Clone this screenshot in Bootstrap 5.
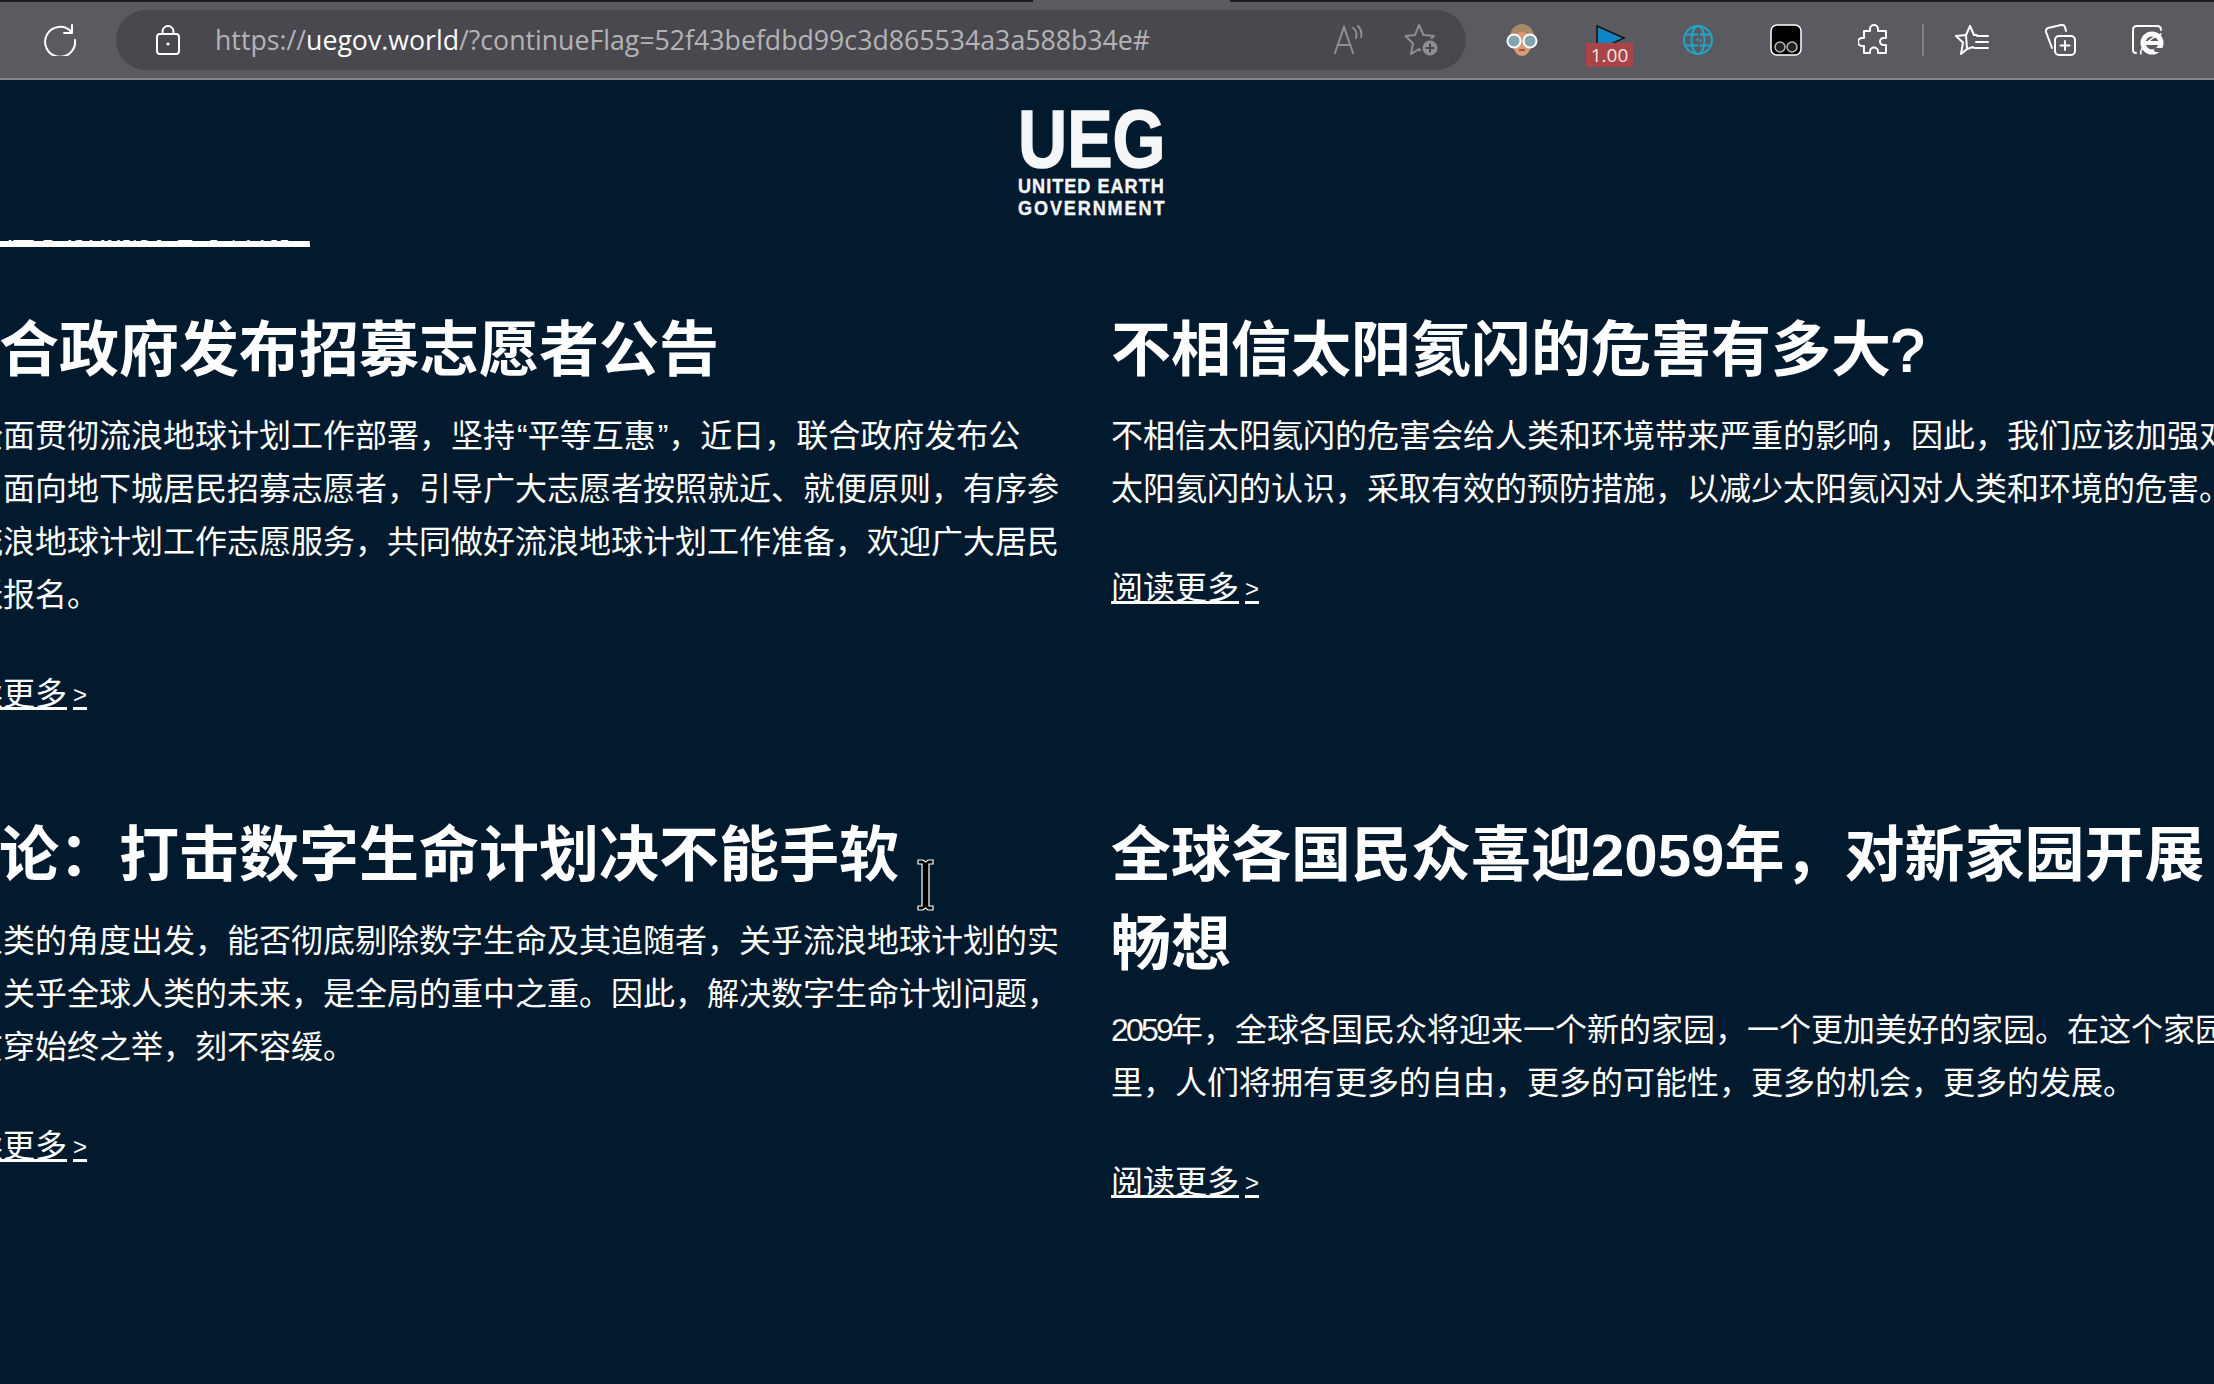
<!DOCTYPE html>
<html lang="zh-CN">

<head>
    <link href="https://cdn.jsdelivr.net/npm/bootstrap@5.3.0/dist/css/bootstrap.min.css" rel="stylesheet">
    <meta charset="UTF-8" />
    <title>UEG</title>
    <style>
        html, body { height: 100%; overflow: hidden; }
        body { background: #021a2d; color: #fff; font-family: "Liberation Sans", "Noto Sans CJK SC", sans-serif; }

        /* browser chrome */
        .chrome-bar { height: 80px; background: linear-gradient(90deg, #1d1d20 1033px, #5b5a60 1033px, #5b5a60 1230px, #1d1d20 1230px) top / 100% 2px no-repeat #5b5a60; border-bottom: 2px solid #84848a; padding-top: 10px; }
        .reload-slot { width: 116px; height: 60px; padding-left: 44px; }
        .addr-bar { width: 1350px; height: 60px; background: #49484e; border-radius: 30px; padding-left: 40px; padding-right: 26px; }
        .addr-url { font-family: "Open Sans", "Noto Sans", sans-serif; font-size: 26.7px; color: #b4b4b6; margin-left: 35px; white-space: nowrap; }
        .addr-url b { font-weight: 400; color: #fff; }
        .ext-slot { width: 88px; height: 60px; position: relative; }
        .addr-tools { gap: 38px; }
        .chrome-sep { width: 2px; height: 32px; background: #818186; margin: 0 4px 0 4px; }
        .speed-icon { margin-top: 15px; }
        .speed-tag { position: absolute; left: 20px; top: 33px; width: 47px; height: 24px; background: #a94548; color: #f3e4e4; font-size: 19px; line-height: 24px; text-align: center; font-family: "Open Sans", sans-serif; }

        /* page header */
        .site-head { height: 160px; padding-top: 28px; padding-right: 31px; }
        .ueg-logo { width: 147px; font-family: "Liberation Sans", sans-serif; font-weight: 700; color: #f4f6f8; line-height: 1; }
        .ueg-big { font-size: 82px; height: 67px; line-height: 61px; transform: scaleX(.83); transform-origin: left top; white-space: nowrap; -webkit-text-stroke: 1.5px #f4f6f8; }
        .ueg-small { font-size: 21px; height: 22px; line-height: 22px; transform: scaleX(.86); transform-origin: left top; white-space: nowrap; letter-spacing: 1.2px; -webkit-text-stroke: .4px #f4f6f8; }
        .ueg-wide { letter-spacing: 2.2px; }

        /* scrolled away line under the header */
        .cut-row { height: 7px; overflow: hidden; margin-left: -61px; position: relative; }
        .cut-link { position: absolute; left: 0; bottom: 0; color: #fff; font-size: 32px; line-height: 1; border-bottom: 3px solid #fff; white-space: nowrap; }

        /* news */
        .news-grid { display: grid; grid-template-columns: 1120px 1120px; column-gap: 52px; margin-left: -61px; padding-top: 59px; }
        .news-item { padding-bottom: 88px; }
        .news-title { font-size: 60px; font-weight: 700; line-height: 89px; margin-bottom: 15px; }
        .news-title .qm { font-weight: 400; -webkit-text-stroke: 2px #fff; }
        .news-text { font-size: 32px; line-height: 53px; margin-bottom: 46px; }
        .news-text .num { letter-spacing: -2.8px; }
        .news-text .qt { padding-left: 2px; }
        .news-more { display: inline-block; color: #fff; font-size: 32px; line-height: 53px; text-decoration: underline; text-decoration-thickness: 3px; text-underline-offset: 2px; }
        .news-more span { font-size: 24px; padding-left: 6px; position: relative; top: -2px; }

        /* mouse cursor sits on top of the page */
        .ibeam { position: absolute; left: 916px; top: 859px; }
    </style>
</head>

<body>
    <div class="chrome-bar d-flex align-items-start">
        <div class="reload-slot d-flex align-items-center">
            <svg width="32" height="32" viewBox="0 0 32 32" fill="none" stroke="#fff" stroke-width="2" stroke-linecap="round" stroke-linejoin="round">
                <path d="M27 7.500A15 15 0 1 0 31 16" />
                <path d="M20 9h8V1" />
            </svg>
        </div>
        <div class="addr-bar d-flex align-items-center">
            <svg width="24" height="30" viewBox="0 0 24 30" fill="none" stroke="#fff" stroke-width="2" stroke-linejoin="round">
                <rect x="1" y="9" width="22" height="20" rx="3" />
                <path d="M6.500 9V6.500a5.500 5.500 0 0 1 11 0V9" />
                <circle cx="12" cy="19" r="1.600" fill="#fff" stroke="none" />
            </svg>
            <span class="addr-url">https://<b>uegov.world</b>/?continueFlag=52f43befdbd99c3d865534a3a588b34e#</span>
            <div class="addr-tools d-flex align-items-center ms-auto">
                <svg width="32" height="30" viewBox="0 0 32 30" fill="none" stroke="#8f8f93" stroke-width="2" stroke-linecap="round">
                    <path d="M1 28 10 2l9 26M4 20h12" />
                    <path d="M19 3c3 2 4 6 3 10M24 1c3 3 4 7 3 11" />
                </svg>
                <svg width="36" height="34" viewBox="0 0 36 34" fill="none" stroke="#8f8f93" stroke-width="2" stroke-linejoin="round">
                    <path d="M15 2l4.500 10L30 13l-8 7.500L24 31l-9-5-8 5 2-10.500L1.500 13 11 12z" />
                    <circle cx="26" cy="25" r="8.500" fill="#8f8f93" stroke="#49484e" stroke-width="2" />
                    <path d="M26 20.500v9M21.500 25h9" stroke="#49484e" />
                </svg>
            </div>
        </div>
        <div class="d-flex align-items-center ms-2 ps-1">
            <div class="ext-slot d-flex align-items-center justify-content-center">
                <svg width="32" height="32" viewBox="0 0 32 32">
                    <ellipse cx="16" cy="13" rx="12" ry="13" fill="#a98a66" />
                    <ellipse cx="16" cy="20" rx="9" ry="12" fill="#d99a78" />
                    <circle cx="8" cy="17" r="6.500" fill="#7fa6b0" stroke="#fff" stroke-width="2" />
                    <circle cx="24" cy="17" r="6.500" fill="#7fa6b0" stroke="#fff" stroke-width="2" />
                    <path d="M13 26h6" stroke="#a8503f" stroke-width="2" />
                </svg>
            </div>
            <div class="ext-slot">
                <svg class="speed-icon d-block mx-auto" width="32" height="22" viewBox="0 0 32 22">
                    <path d="M3 1v20h10L30 13z" fill="#0f86c4" stroke="#111" stroke-width="1.500" />
                </svg>
                <div class="speed-tag">1.00</div>
            </div>
            <div class="ext-slot d-flex align-items-center justify-content-center">
                <svg width="32" height="32" viewBox="0 0 32 32" fill="none" stroke="#1fa6c9" stroke-width="2">
                    <circle cx="16" cy="16" r="14" />
                    <ellipse cx="16" cy="16" rx="6.500" ry="14" />
                    <path d="M3 10.500h26M3 21.500h26" />
                    <path d="M18 8l-5 9h5l-3 8 6-10h-5z" fill="#1fa6c9" stroke="#5b5a60" stroke-width="1" />
                </svg>
            </div>
            <div class="ext-slot d-flex align-items-center justify-content-center">
                <svg width="32" height="32" viewBox="0 0 32 32">
                    <rect x="1" y="1" width="30" height="30" rx="6" fill="#000" stroke="#fff" stroke-width="1.500" />
                    <circle cx="10" cy="23" r="5" fill="#222" stroke="#b9b9b9" stroke-width="1.500" />
                    <circle cx="22" cy="23" r="5" fill="#222" stroke="#b9b9b9" stroke-width="1.500" />
                </svg>
            </div>
            <div class="ext-slot d-flex align-items-center justify-content-center">
                <svg width="32" height="32" viewBox="0 0 32 32" fill="none" stroke="#fff" stroke-width="2" stroke-linejoin="round">
                    <path d="M12 7V5a4 4 0 0 1 8 0v2h8v7h-2.500a3.500 3.500 0 0 0 0 7H28v8h-8v-1.500a4 4 0 0 0-8 0V29H6v-7H4a4 4 0 0 1 0-8h2V7z" />
                </svg>
            </div>
            <div class="chrome-sep"></div>
            <div class="ext-slot d-flex align-items-center justify-content-center">
                <svg width="34" height="32" viewBox="0 0 34 32" fill="none" stroke="#fff" stroke-width="2" stroke-linejoin="round" stroke-linecap="round">
                    <path d="M15 2l4 9h3M12 25l-6 5 2-11.500L1 12l10-1z" />
                    <path d="M15 2l-4 9M22 12h11M21 18h12M19 24h14M12 25l6-2" />
                </svg>
            </div>
            <div class="ext-slot d-flex align-items-center justify-content-center">
                <svg width="32" height="32" viewBox="0 0 32 32" fill="none" stroke="#fff" stroke-width="2" stroke-linejoin="round" stroke-linecap="round">
                    <path d="M8 24 2 8q-.5-3 2-4l13-3q3-.5 4 2l1 4" />
                    <rect x="11" y="12" width="20" height="19" rx="4" />
                    <path d="M21 17v9M16.500 21.500h9" />
                </svg>
            </div>
            <div class="ext-slot d-flex align-items-center justify-content-center">
                <svg width="32" height="30" viewBox="0 0 32 30" fill="none" stroke="#fff" stroke-width="2" stroke-linecap="round">
                    <path d="M4 28Q1 28 1 25V5q0-4 4-4h20q4 0 4 4" />
                    <circle cx="20" cy="18" r="9" stroke-width="5" />
                    <path d="M12 18h16" stroke-width="4" />
                    <path d="M24 25h5" stroke="#5b5a60" stroke-width="4" />
                    <path d="M9 29c-2-4 8-16 20-20" stroke-width="1.500" />
                </svg>
            </div>
        </div>
    </div>

    <header class="site-head d-flex justify-content-center">
        <div class="ueg-logo">
            <div class="ueg-big">UEG</div>
            <div class="ueg-small">UNITED EARTH</div>
            <div class="ueg-small ueg-wide">GOVERNMENT</div>
        </div>
    </header>

    <div class="cut-row">
        <a class="cut-link">全方位了解流浪地球计划&gt;</a>
    </div>

    <main class="news-grid">
        <article class="news-item">
            <h2 class="news-title">联合政府发布招募志愿者公告</h2>
            <p class="news-text">为全面贯彻流浪地球计划工作部署，坚持<span class="qt">“</span>平等互惠<span class="qt">”</span>，近日，联合政府发布公告，面向地下城居民招募志愿者，引导广大志愿者按照就近、就便原则，有序参与流浪地球计划工作志愿服务，共同做好流浪地球计划工作准备，欢迎广大居民踊跃报名。</p>
            <a class="news-more" href="#">阅读更多<span>&gt;</span></a>
        </article>
        <article class="news-item">
            <h2 class="news-title">不相信太阳氦闪的危害有多大<span class="qm">?</span></h2>
            <p class="news-text">不相信太阳氦闪的危害会给人类和环境带来严重的影响，因此，我们应该加强对太阳氦闪的认识，采取有效的预防措施，以减少太阳氦闪对人类和环境的危害。</p>
            <a class="news-more" href="#">阅读更多<span>&gt;</span></a>
        </article>
        <article class="news-item">
            <h2 class="news-title">社论：打击数字生命计划决不能手软</h2>
            <p class="news-text">从人类的角度出发，能否彻底剔除数字生命及其追随者，关乎流浪地球计划的实效，关乎全球人类的未来，是全局的重中之重。因此，解决数字生命计划问题，是贯穿始终之举，刻不容缓。</p>
            <a class="news-more" href="#">阅读更多<span>&gt;</span></a>
        </article>
        <article class="news-item">
            <h2 class="news-title">全球各国民众喜迎2059年，对新家园开展畅想</h2>
            <p class="news-text"><span class="num">2059</span>年，全球各国民众将迎来一个新的家园，一个更加美好的家园。在这个家园里，人们将拥有更多的自由，更多的可能性，更多的机会，更多的发展。</p>
            <a class="news-more" href="#">阅读更多<span>&gt;</span></a>
        </article>
    </main>

    <svg class="ibeam" width="19" height="52" viewBox="0 0 19 52">
        <path d="M2 1h5l2.500 2L12 1h5v4h-4v42h4v4h-5l-2.500-2L7 51H2v-4h4V5H2z" fill="#000" stroke="#fff" stroke-width="1.200" />
    </svg>
</body>

</html>
